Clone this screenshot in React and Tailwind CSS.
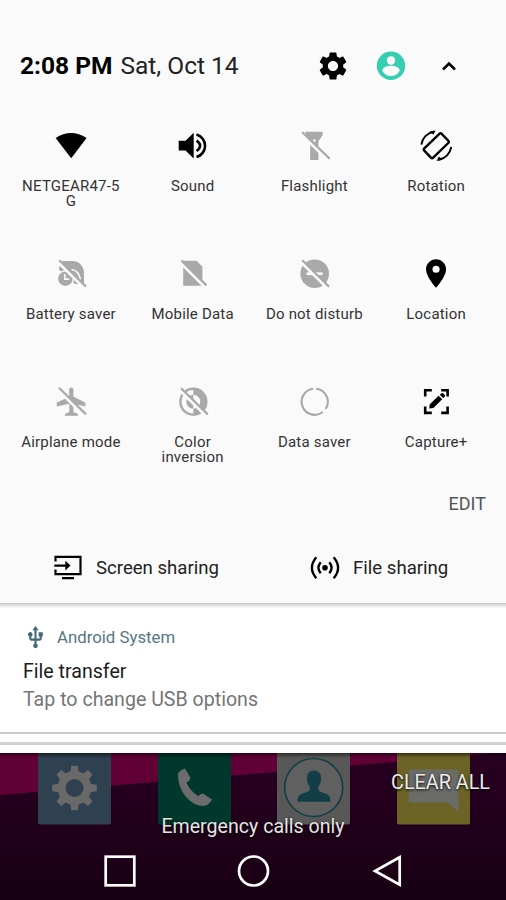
import React from 'react';
import clsx from 'clsx';
import { MdSettings, MdUsb } from 'react-icons/md';

function Icon({ children, className }) {
    return (
        <svg
            viewBox="0 0 32 32"
            className={clsx('w-8 h-8 shrink-0', className)}
            fill="currentColor"
        >
            {children}
        </svg>
    );
}

function Slash({ x1 = 4.3, y1 = 2.2, x2 = 31, y2 = 28.6 }) {
    return (
        <g fill="none">
            <path
                d={`M${x1 - 1.4} ${y1 + 1.4}L${x2 - 1.4} ${y2 + 1.4}`}
                stroke="#fafafa"
                strokeWidth="3.4"
            />
            <path
                d={`M${x1} ${y1}L${x2} ${y2}`}
                stroke="currentColor"
                strokeWidth="2.2"
            />
        </g>
    );
}

const icons = {
    wifi: <path d="M.6 8Q16-2 31.6 8L16.2 28.2z" />,
    sound: (
        <>
            <path d="M1.7 10.8h6.8l8.2-8v25.8l-8.2-8H1.7z" />
            <path
                d="M19.5 4.6A11.6 11.6 0 0 1 19.5 27M19.6 10.6Q26.6 15.7 19.6 21"
                fill="none"
                stroke="currentColor"
                strokeWidth="2.6"
            />
        </>
    ),
    flashlight: (
        <>
            <path d="M7 1.8h17.6v3.4l-4.2 6V30h-8.2V11.2L8 5.2z" />
            <circle cx="16.4" cy="10.6" r="1.3" fill="#fafafa" />
            <Slash x2={31.6} />
        </>
    ),
    rotation: (
        <>
            <g fill="none" stroke="currentColor">
                <rect
                    x="4.2"
                    y="9.3"
                    width="24.2"
                    height="12.8"
                    rx="1.6"
                    strokeWidth="2.4"
                    transform="rotate(-44 16.3 15.7)"
                />
                <path
                    d="M1.4 14.6A15 15 0 0 1 13.6 1.8M31.2 17A15 15 0 0 1 18.8 29.8"
                    strokeWidth="1.9"
                />
            </g>
            <path d="M9.6 1.4L15.6.4L13.4 4.8zM22.6 29.8l-6 1.2 2.2-4.4z" />
        </>
    ),
    battery: (
        <>
            <path d="M7 2.9h10.5C24.6 2.9 29 8.6 29 15v11h-9L4.2 12V9.4z" />
            <path
                d="M16.5 11.5q7 .6 9 10"
                fill="none"
                stroke="#fafafa"
                strokeWidth="1.5"
            />
            <circle cx="10.4" cy="20.7" r="8.6" fill="#fafafa" />
            <circle cx="10.4" cy="20.7" r="7.2" />
            <path
                d="M9.8 16v5.2h4.4"
                fill="none"
                stroke="#fafafa"
                strokeWidth="1.7"
            />
            <Slash />
        </>
    ),
    mobile: (
        <>
            <path d="M6.2 2.8h13.4l5.8 6v19H6.2z" />
            <Slash x1={4.6} y1={2.6} x2={29.4} y2={27.4} />
        </>
    ),
    dnd: (
        <>
            <circle cx="16.7" cy="15.7" r="14.3" />
            <path d="M8.6 14.3h16v2.8h-16z" fill="#fafafa" />
            <Slash />
        </>
    ),
    location: (
        <path
            transform="translate(-1.1 -1.6) scale(1.43)"
            fillRule="evenodd"
            d="M12 2C8.13 2 5 5.13 5 9c0 5.25 7 13 7 13s7-7.75 7-13c0-3.87-3.13-7-7-7zm0 9.5a2.5 2.5 0 1 1 0-5 2.5 2.5 0 0 1 0 5z"
        />
    ),
    airplane: (
        <>
            <path d="M16.3 1.4c1.3 0 2.1 1 2.1 2.3v6.8l12 6.2v3.8l-12-2.8v8.4l4.6 1.8v1.9H9.9v-1.9l4.4-1.8v-8.4L1.8 20.5v-3.8l12.4-6.2V3.7c0-1.3.8-2.3 2.1-2.3z" />
            <Slash x1={4} y1={1.7} x2={31} y2={28.4} />
        </>
    ),
    inversion: (
        <>
            <circle
                cx="16.3"
                cy="15.7"
                r="12.9"
                fill="none"
                stroke="currentColor"
                strokeWidth="2.4"
            />
            <path d="M16.3 1.7a14 14 0 0 1 0 28v-7a7 7 0 0 0 0-14z" />
            <path d="M16.3 8.7v14a7 7 0 0 1 0-14z" />
            <Slash x1={4} y1={2.3} x2={30.8} y2={28.4} />
        </>
    ),
    data: (
        <path
            d="M18.3 2.7A13.1 13.1 0 0 1 27.6 23M24.8 26A13.1 13.1 0 1 1 15.1 2.7"
            fill="none"
            stroke="currentColor"
            strokeWidth="2.1"
        />
    ),
    capture: (
        <>
            <path
                d="M5.2 10.5V4.2h6.6M21.2 4.2h6.4v6.3M27.6 20.5v6.4h-6.4M11.8 26.9H5.2v-6.4"
                fill="none"
                stroke="currentColor"
                strokeWidth="2.6"
            />
            <path d="M9.2 22.6l.6-4.4L18.6 9.7l3.6 3.6-8.8 8.7zM19.8 8.8l1.7-1.6q.8-.6 1.6 0l1.7 1.7q.7.8 0 1.5l-1.6 1.7z" />
        </>
    ),
    screen: (
        <>
            <path
                d="M3.5 9.5V4.8h25v17.4h-25v-4.7M10 26.2h12"
                fill="none"
                stroke="currentColor"
                strokeWidth="2.2"
            />
            <path d="M2.3 12.5h11V8.7l5.2 4.9-5.2 4.9v-3.8h-11z" />
        </>
    ),
    file: (
        <>
            <circle cx="16" cy="15.7" r="2.8" />
            <path
                d="M11.7 10.2q-4.6 5.5 0 11M20.3 10.2q4.6 5.5 0 11M7.3 5.2q-8.8 10.5 0 21M24.7 5.2q8.8 10.5 0 21"
                fill="none"
                stroke="currentColor"
                strokeWidth="2.3"
            />
        </>
    )
};

const tiles = [
    { icon: 'wifi', label: 'NETGEAR47-5G', on: true, wrapAnywhere: true },
    { icon: 'sound', label: 'Sound', on: true },
    { icon: 'flashlight', label: 'Flashlight' },
    { icon: 'rotation', label: 'Rotation', on: true },
    { icon: 'battery', label: 'Battery saver' },
    { icon: 'mobile', label: 'Mobile Data' },
    { icon: 'dnd', label: 'Do not disturb' },
    { icon: 'location', label: 'Location', on: true },
    { icon: 'airplane', label: 'Airplane mode' },
    { icon: 'inversion', label: 'Color inversion' },
    { icon: 'data', label: 'Data saver' },
    { icon: 'capture', label: 'Capture+', on: true }
];

function Header() {
    return (
        <div className="h-[130px] pt-[50px] pl-5 pr-12 flex items-start justify-between">
            <p className="text-[24.5px] leading-8 whitespace-nowrap text-[#222]">
                <span className="font-bold text-black">2:08 PM</span>{' '}
                <span className="ml-0.5">Sat, Oct 14</span>
            </p>
            <div className="flex items-center h-8">
                <MdSettings className="w-[34px] h-[34px] text-black mr-[25px]" />
                <Icon className="text-[#35ceb1] mr-[33px]">
                    <circle cx="16" cy="15.7" r="14.2" />
                    <circle cx="16" cy="10.5" r="4.2" fill="#fafafa" />
                    <path
                        d="M7.3 20.5c0-3.4 5.8-4.7 8.7-4.7s8.7 1.3 8.7 4.7c-1.7 3.6-5 5.6-8.7 5.6s-7-2-8.7-5.6z"
                        fill="#fafafa"
                    />
                </Icon>
                <svg
                    viewBox="0 0 18 18"
                    className="w-[18px] h-[18px] text-black"
                >
                    <path
                        d="M3 12.5L9 6.5L15 12.5"
                        fill="none"
                        stroke="currentColor"
                        strokeWidth="2.5"
                    />
                </svg>
            </div>
        </div>
    );
}

function Tile({ icon, label, on, wrapAnywhere }) {
    return (
        <div className="flex flex-col items-center">
            <Icon className={on ? 'text-black' : 'text-[#a9a9a9]'}>
                {icons[icon]}
            </Icon>
            <p
                className={clsx(
                    'mt-[17px] w-[102px] text-center text-[15px] leading-[15px] tracking-[0.2px] text-[#333]',
                    { 'break-all': wrapAnywhere }
                )}
            >
                {label}
            </p>
        </div>
    );
}

function Notification() {
    return (
        <div className="h-[131px] bg-white border-b-2 border-[#cbcbcb] flex flex-col">
            <div className="h-[5px] shrink-0 bg-linear-to-b from-[#c6c6c6] to-white" />
            <div className="pl-[23px]">
                <div className="flex items-center pt-[17px] h-[42px] text-[#557684]">
                    <MdUsb className="w-[25px] h-[25px] text-[#42697a]" />
                    <span className="ml-[9px] text-[16.8px]">
                        Android System
                    </span>
                </div>
                <p className="mt-2 text-[19.6px] leading-7 text-[#1c1c1c]">
                    File transfer
                </p>
                <p className="text-[19.6px] leading-7 text-[#757575]">
                    Tap to change USB options
                </p>
            </div>
        </div>
    );
}

function Wallpaper() {
    return (
        <svg
            viewBox="0 0 506 147"
            className="col-start-1 row-start-1 w-[506px] h-[147px]"
        >
            <defs>
                <linearGradient id="night" x1="0" y1="0" x2="0" y2="1">
                    <stop offset="0" stopColor="#290023" />
                    <stop offset="1" stopColor="#180012" />
                </linearGradient>
            </defs>
            <path d="M0 0h506v147H0z" fill="url(#night)" />
            <path d="M0 0h500L0 42z" fill="#620138" />
        </svg>
    );
}

function Dock() {
    return (
        <div className="col-start-1 row-start-1 flex gap-[46.5px] pl-[38px] items-start">
            <svg viewBox="0 0 73 72" className="w-[73px] h-[72px] shrink-0">
                <rect y="-4" width="73" height="75.5" rx="2" fill="#2f4050" />
                <g fill="#696969" transform="translate(36.5 35)">
                    {[0, 45, 90, 135, 180, 225, 270, 315].map((a) => (
                        <path
                            key={a}
                            d="M-4.5-14L-3.2-22.3H3.2L4.5-14z"
                            transform={`rotate(${a})`}
                        />
                    ))}
                    <circle r="17" />
                    <circle r="9" fill="#2f4050" />
                </g>
            </svg>
            <svg viewBox="0 0 73 72" className="w-[73px] h-[72px] shrink-0">
                <rect y="-4" width="73" height="75.5" rx="2" fill="#00382c" />
                <path
                    d="M20 20.5q2-3.5 7-5l5.5 9.5q-1 3-4 4.5 3.5 8.5 11.5 13.5 2.5-2.5 5-2.5l9 6q-3 5.5-8 6.5-10 0-18-9-8.5-10.5-8-23.5z"
                    fill="#6c6c6c"
                />
            </svg>
            <svg viewBox="0 0 73 72" className="w-[73px] h-[72px] shrink-0">
                <rect y="-4" width="73" height="75.5" rx="2" fill="#585858" />
                <circle
                    cx="36.7"
                    cy="34.5"
                    r="29"
                    fill="#606060"
                    stroke="#123f45"
                    strokeWidth="1.7"
                />
                <path
                    d="M37 17.5c4.6 0 7.3 3.5 7 8.5-.2 4-1.5 6-2.7 8-.8 4 .7 4.5 6.5 6.3 4.5 1.5 5.6 4 5.7 8.4H20.5c.1-4.4 1.2-6.9 5.7-8.4 5.8-1.8 7.3-2.3 6.5-6.3-1.2-2-2.5-4-2.7-8-.3-5 2.4-8.5 7-8.5z"
                    fill="#123f45"
                />
            </svg>
            <svg viewBox="0 0 73 72" className="w-[73px] h-[72px] shrink-0">
                <rect y="-4" width="73" height="75.5" rx="2" fill="#6c6426" />
                <path
                    d="M13.5 16.5h46q2 0 2 2V59L51 49.5H13.5q-2 0-2-2v-29q0-2 2-2z"
                    fill="#6b6b68"
                />
            </svg>
        </div>
    );
}

const navShapes = [
    <rect x="2.7" y="2.7" width="28.6" height="28.6" />,
    <circle cx="17.5" cy="17" r="14.5" />,
    <path d="M30.7 3.2L6 17L30.7 30.8z" />
];

function NavBar() {
    return (
        <div className="mt-auto h-[58px] px-[103px] flex items-center justify-between text-white">
            {navShapes.map((shape, key) => (
                <svg
                    key={key}
                    viewBox="0 0 34 34"
                    className="w-[34px] h-[34px]"
                    fill="none"
                    stroke="currentColor"
                    strokeWidth="2.7"
                >
                    {shape}
                </svg>
            ))}
        </div>
    );
}

export default function App() {
    return (
        <div
            className="w-[506px] h-[900px] overflow-hidden flex flex-col bg-[#fafafa]"
            style={{ fontFamily: 'Roboto, sans-serif' }}
        >
            <div className="h-[603px] flex flex-col shrink-0">
                <Header />
                <div className="h-[356px] shrink-0 pl-2.5 pr-[9px] grid grid-cols-4 auto-rows-[128px]">
                    {tiles.map((tile) => (
                        <Tile key={tile.icon} {...tile} />
                    ))}
                </div>
                <p className="h-9 leading-9 pr-5 text-right text-[18px] text-[#555]">
                    EDIT
                </p>
                <div className="pt-[30px] flex items-center text-[18.6px] text-[#222]">
                    <div className="flex items-center pl-[52px] w-[309px]">
                        <Icon className="text-black">{icons.screen}</Icon>
                        <span className="ml-3 pt-0.5">Screen sharing</span>
                    </div>
                    <div className="flex items-center">
                        <Icon className="text-black">{icons.file}</Icon>
                        <span className="ml-3 pt-0.5">File sharing</span>
                    </div>
                </div>
            </div>
            <Notification />
            <div className="h-[11px] shrink-0 bg-white border-b-3 border-[#d2d2d2]" />
            <div className="h-2 shrink-0 bg-white" />
            <div className="grid h-[147px] shrink-0">
                <Wallpaper />
                <Dock />
                <div className="col-start-1 row-start-1 z-10 flex flex-col text-[#e4e4e4] [text-shadow:0_1px_3px_#000] bg-linear-to-b from-black/50 to-transparent to-[5px]">
                    <p className="pt-4 pr-4 text-right text-[19.8px] leading-7 text-[#ececec]">
                        CLEAR ALL
                    </p>
                    <p className="mt-4 text-center text-[19.6px] leading-7">
                        Emergency calls only
                    </p>
                    <NavBar />
                </div>
            </div>
        </div>
    );
}
